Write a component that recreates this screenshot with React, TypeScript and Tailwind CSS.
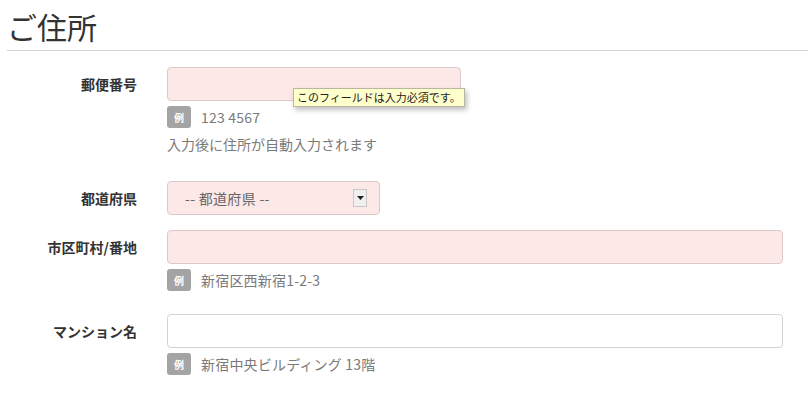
import React from "react";

const font = { fontFamily: '"Noto Sans CJK JP", "Noto Sans", sans-serif' };

function Badge() {
  return (
    <span className="flex h-[22px] w-[24px] shrink-0 items-center justify-center rounded-[3px] bg-[#a4a4a4] text-[10px] font-bold text-white">
      例
    </span>
  );
}

function Example({ text }: { text: string }) {
  return (
    <div className="mt-[5px] flex items-center gap-[10px]">
      <Badge />
      <span className="text-[14px] leading-[22px] tracking-[0.2px] text-[#7a7a7a]">{text}</span>
    </div>
  );
}

function Label({ text }: { text: string }) {
  return (
    <div className="flex h-[34px] w-[137px] shrink-0 items-center justify-end text-[14px] font-bold text-[#333]">
      {text}
    </div>
  );
}

export default function App() {
  return (
    <div className="relative h-[393px] w-[808px] overflow-hidden bg-white" style={font}>
      <div className="pl-[7px]">
        <h1 className="h-[51px] border-b border-[#d4d4d4] pt-[6px] text-[30px] font-normal leading-[40px] text-[#333]">
          ご住所
        </h1>
      </div>

      <div className="flex flex-col pr-[25px]">
        {/* 郵便番号 */}
        <div className="mt-[16px] flex gap-[30px]">
          <Label text="郵便番号" />
          <div className="flex flex-col">
            <div className="h-[34px] w-[294px] rounded-[4px] border border-[#dccaca] bg-[#fde8e8]" />
            <Example text="123 4567" />
            <div className="mt-[5px] text-[14px] leading-[22px] text-[#7a7a7a]">入力後に住所が自動入力されます</div>
          </div>
        </div>

        {/* 都道府県 */}
        <div className="mt-[26px] flex gap-[30px]">
          <Label text="都道府県" />
          <div className="flex h-[34px] w-[213px] items-center justify-between rounded-[4px] border border-[#dccaca] bg-[#fde8e8] pl-[17px] pr-[12px]">
            <span className="text-[14px] tracking-[0.3px] text-[#666]">-- 都道府県 --</span>
            <span className="flex h-[18px] w-[14px] items-center justify-center border border-[#c8c8c8] bg-[#efefef]">
              <svg width="7" height="4" viewBox="0 0 7 4">
                <path d="M0 0 L7 0 L3.5 4 Z" fill="#222" />
              </svg>
            </span>
          </div>
        </div>

        {/* 市区町村/番地 */}
        <div className="mt-[15px] flex gap-[30px]">
          <Label text="市区町村/番地" />
          <div className="flex flex-1 flex-col">
            <div className="h-[34px] w-full rounded-[4px] border border-[#dccaca] bg-[#fde8e8]" />
            <Example text="新宿区西新宿1-2-3" />
          </div>
        </div>

        {/* マンション名 */}
        <div className="mt-[23px] flex gap-[30px]">
          <Label text="マンション名" />
          <div className="flex flex-1 flex-col">
            <div className="h-[34px] w-full rounded-[4px] border border-[#d4d4d4] bg-white" />
            <Example text="新宿中央ビルディング 13階" />
          </div>
        </div>
      </div>

      {/* tooltip */}
      <div className="absolute left-[293px] top-[88px] flex h-[19px] items-center border border-[#b8b8a0] bg-[#ffffcc] px-[3px] text-[11px] text-[#222] shadow-[2px_3px_5px_rgba(0,0,0,0.25)]">
        このフィールドは入力必須です。
      </div>
    </div>
  );
}
